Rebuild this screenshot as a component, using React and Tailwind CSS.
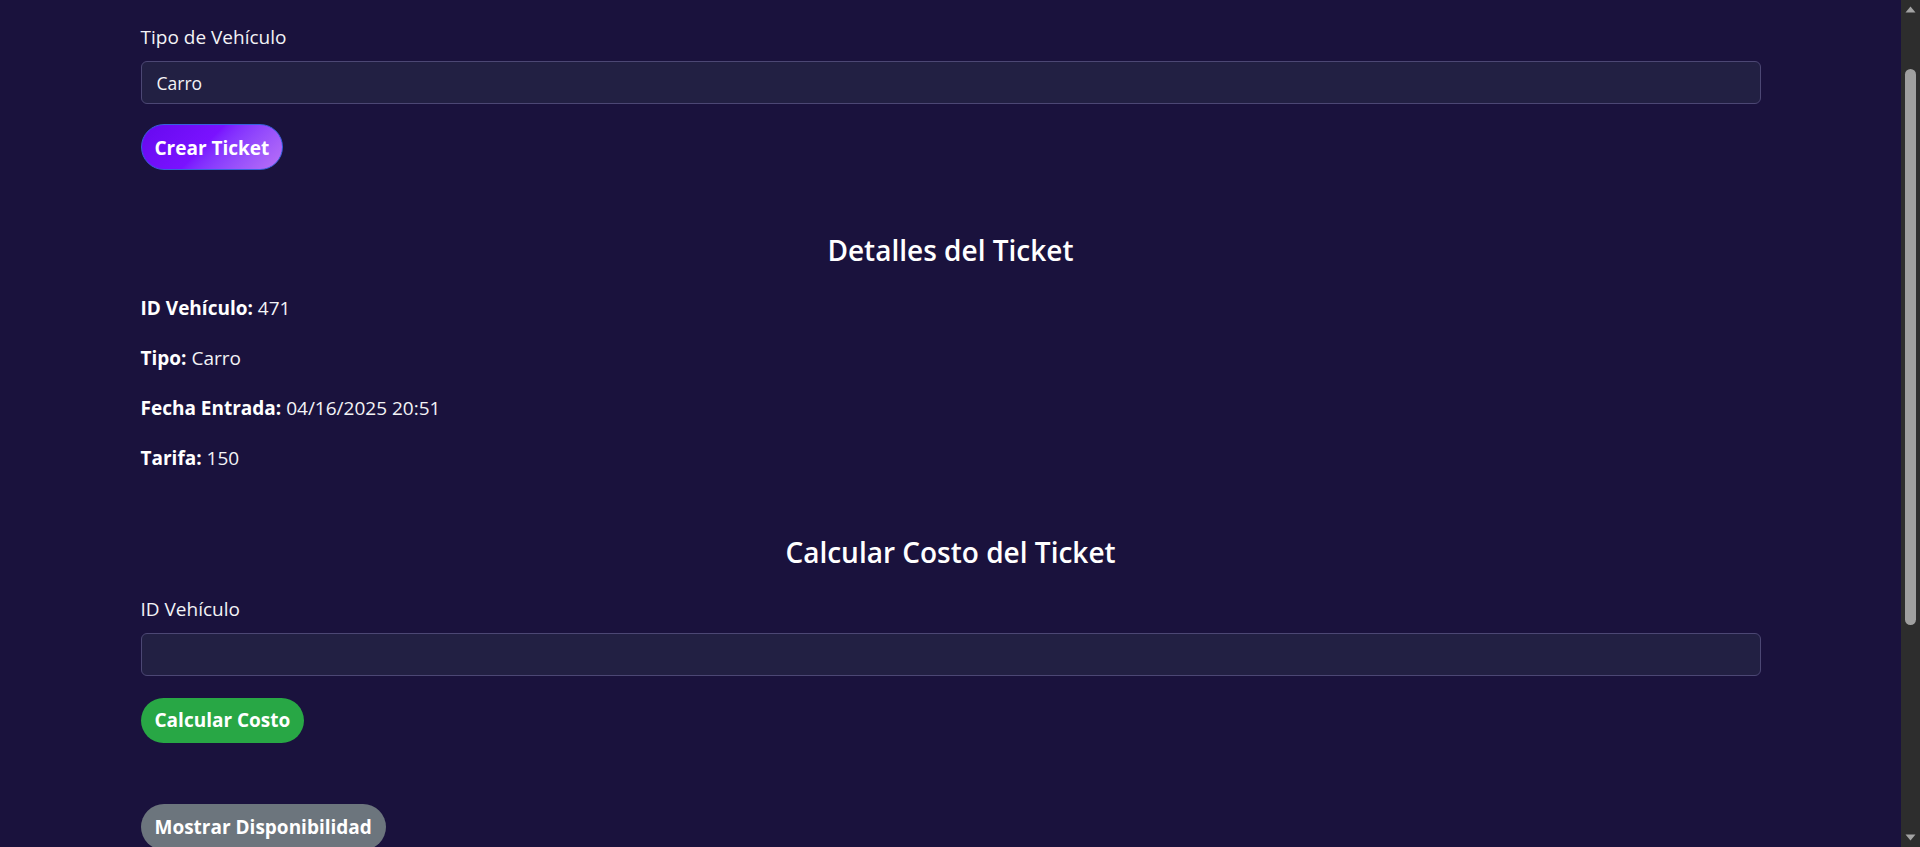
import { useState } from 'react'

const font = { fontFamily: '"Open Sans", "Noto Sans", sans-serif' }

function Field({ label, value, onChange, className = '' }) {
  return (
    <div className={`flex flex-col ${className}`}>
      <label className="text-[19px] leading-[26px] text-[#f3f3f6]">{label}</label>
      <input
        value={value}
        onChange={(e) => onChange(e.target.value)}
        className="mt-[11px] h-[43px] w-full rounded-[6px] border border-[#4c4774] bg-[#222043] px-[15px] text-[17.5px] text-[#f3f3f6] outline-none"
      />
    </div>
  )
}

function Detail({ label, value }) {
  return (
    <p className="text-[19px] leading-[28px] text-[#f3f3f6]">
      <span className="font-bold text-white">{label}:</span> {value}
    </p>
  )
}

function Scrollbar() {
  return (
    <div className="flex w-[19px] shrink-0 flex-col items-center bg-[#2d2d2d]">
      <div className="flex h-[19px] w-full items-center justify-center">
        <svg width="11" height="7" viewBox="0 0 11 7">
          <path d="M5.5 0.5 L10.5 6.5 L0.5 6.5 Z" fill="#a3a3a3" />
        </svg>
      </div>
      <div className="mt-[50px] h-[556px] w-[11px] rounded-full bg-[#9f9f9f]" />
      <div className="flex-1" />
      <div className="flex h-[19px] w-full items-center justify-center">
        <svg width="11" height="7" viewBox="0 0 11 7">
          <path d="M0.5 0.5 L10.5 0.5 L5.5 6.5 Z" fill="#a3a3a3" />
        </svg>
      </div>
    </div>
  )
}

export default function App() {
  const [tipo, setTipo] = useState('Carro')
  const [idVehiculo, setIdVehiculo] = useState('')

  return (
    <div className="flex h-[847px] w-full overflow-hidden bg-[#1a123d]" style={font}>
      <main className="flex-1 overflow-hidden">
        <div className="mx-auto flex w-full max-w-[1620px] flex-col pt-[24px]">
          <Field label="Tipo de Vehículo" value={tipo} onChange={setTipo} />
          <div className="mt-[20px]">
            <button className="h-[46px] rounded-full border border-[#3560dc] bg-linear-135 from-[#6608ef] via-[#7a12ff] via-45% to-[#ba70f6] px-[13px] pt-[2px] text-[19px] font-bold text-white">
              Crear Ticket
            </button>
          </div>

          <h2 className="mt-[62px] text-center text-[28px] leading-[36px] font-semibold text-white">
            Detalles del Ticket
          </h2>
          <div className="mt-[26px] flex flex-col gap-[22px]">
            <Detail label="ID Vehículo" value="471" />
            <Detail label="Tipo" value="Carro" />
            <Detail label="Fecha Entrada" value="04/16/2025 20:51" />
            <Detail label="Tarifa" value="150" />
          </div>

          <h2 className="mt-[62px] text-center text-[28px] leading-[36px] font-semibold text-white">
            Calcular Costo del Ticket
          </h2>
          <Field className="mt-[26px]" label="ID Vehículo" value={idVehiculo} onChange={setIdVehiculo} />
          <div className="mt-[22px]">
            <button className="h-[45px] rounded-full bg-[#28a745] px-[14px] text-[19px] font-bold text-white">
              Calcular Costo
            </button>
          </div>

          <div className="mt-[61px]">
            <button className="h-[46px] rounded-full bg-[#6c757d] px-[14px] text-[19px] font-bold text-white">
              Mostrar Disponibilidad
            </button>
          </div>
        </div>
      </main>
      <Scrollbar />
    </div>
  )
}
